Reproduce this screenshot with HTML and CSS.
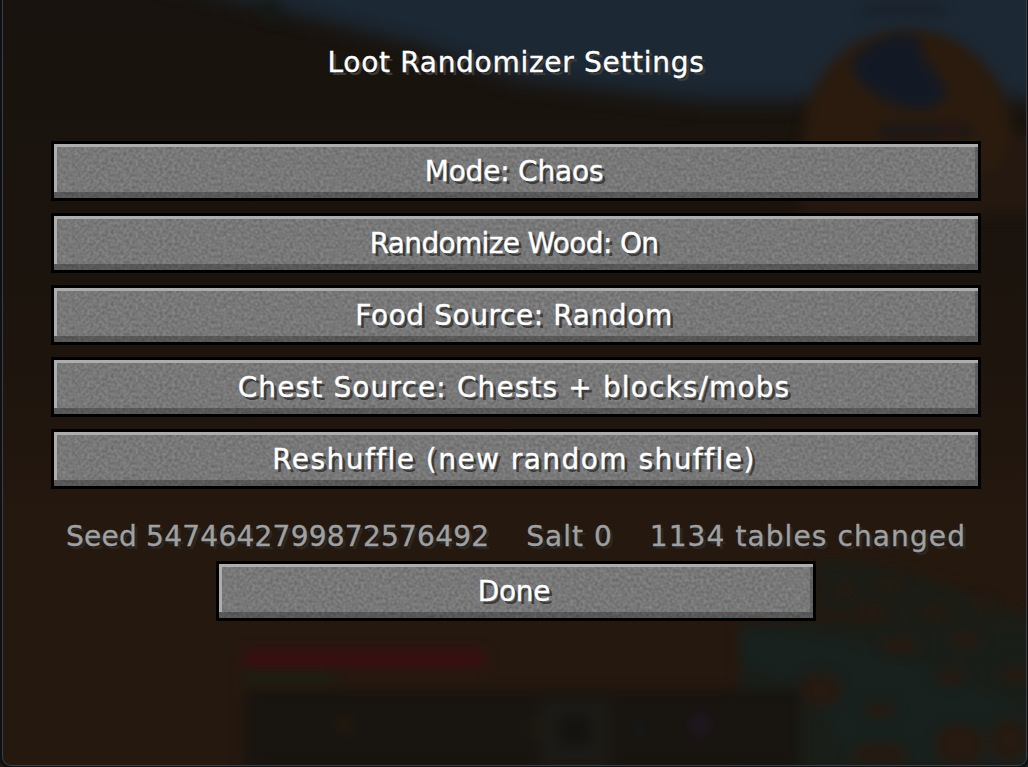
FILE: index.html
```html
<!DOCTYPE html>
<html lang="en">
<head>
<meta charset="utf-8">
<title>Loot Randomizer Settings</title>
<link rel="stylesheet" href="styles.css">
</head>
<body>
<div class="world" aria-hidden="true">
<svg class="world-art" width="1028" height="767" viewBox="0 0 1028 767">
<defs>
<filter id="b10" x="-30%" y="-30%" width="160%" height="160%" color-interpolation-filters="sRGB"><feGaussianBlur stdDeviation="10"/></filter>
<filter id="b4" x="-30%" y="-30%" width="160%" height="160%" color-interpolation-filters="sRGB"><feGaussianBlur stdDeviation="6"/></filter>
<linearGradient id="ground" x1="0" y1="0" x2="0" y2="1">
<stop offset="0" stop-color="#18130e"/><stop offset=".45" stop-color="#1c140d"/><stop offset=".7" stop-color="#25180f"/><stop offset="1" stop-color="#25180f"/>
</linearGradient>
</defs>
<rect width="1028" height="767" fill="url(#ground)"/>
<path filter="url(#b10)" d="M120 -30L340 25L420 45L520 80L700 100L830 100L1060 100L1060 -30Z" fill="#1c2834"/>
<g filter="url(#b4)">
<path d="M258 0L280 0L275 22L265 20Z" fill="#141a14"/>
<rect x="865" y="5" width="80" height="10" fill="#1a2029"/>
<ellipse cx="908" cy="135" rx="104" ry="106" fill="#2a1b0e"/>
<rect x="800" y="135" width="240" height="80" fill="#241810"/>
<ellipse cx="908" cy="135" rx="104" ry="60" fill="#2a1b0e"/>
<path d="M900 35C875 38 852 55 853 68C858 85 880 100 905 108C925 112 945 108 945 90C942 75 920 62 922 48C923 40 915 35 900 35Z" fill="#131924"/>
<rect x="880" y="125" width="90" height="12" fill="#18161a"/>
<rect x="945" y="120" width="10" height="16" fill="#2c1414"/>
<rect x="740" y="622" width="300" height="150" fill="#1a1e19"/>
<path d="M816 561C880 555 960 590 1040 620L1040 640L820 610Z" fill="#1b1d16"/>
<path d="M740 630C820 630 940 665 1040 720L1040 767L850 767C830 700 780 670 740 660Z" fill="#18211e"/>
</g>
<g filter="url(#b4)" fill="#261a11">
<ellipse cx="845" cy="590" rx="14" ry="6"/><ellipse cx="890" cy="585" rx="14" ry="6"/><ellipse cx="870" cy="612" rx="16" ry="8"/>
<ellipse cx="935" cy="612" rx="14" ry="7"/><ellipse cx="980" cy="605" rx="12" ry="6"/><ellipse cx="900" cy="645" rx="18" ry="9"/>
<ellipse cx="965" cy="640" rx="16" ry="8"/><ellipse cx="1015" cy="675" rx="16" ry="8"/><ellipse cx="950" cy="678" rx="14" ry="8"/>
<ellipse cx="820" cy="690" rx="22" ry="18"/><ellipse cx="880" cy="710" rx="16" ry="8"/><ellipse cx="880" cy="755" rx="30" ry="12"/>
<ellipse cx="960" cy="745" rx="26" ry="22"/><ellipse cx="1010" cy="740" rx="20" ry="22"/>
</g>
<g filter="url(#b4)">
<rect x="245" y="650" width="240" height="17" fill="#3a0e12"/>
<rect x="245" y="672" width="90" height="12" fill="#1c2014"/>
<rect x="245" y="690" width="555" height="80" fill="#18140f"/>
<rect x="540" y="700" width="70" height="67" fill="#1c1a16"/>
<rect x="560" y="715" width="30" height="30" fill="#141310"/>
<circle cx="345" cy="725" r="8" fill="#241a0e"/><circle cx="535" cy="728" r="7" fill="#1e1a10"/>
<circle cx="700" cy="725" r="12" fill="#1f161f"/><circle cx="640" cy="730" r="8" fill="#121a18"/>
</g>
<rect x="0" y="44" width="2" height="20" fill="#b98a45"/>
<rect x="0" y="60" width="2" height="6" fill="#d8d8d8"/>
<rect x="0" y="128" width="2" height="8" fill="#a89a8c"/>
<rect x="1026" y="52" width="2" height="7" fill="#a87a3c"/>
<rect x="1026" y="35" width="2" height="1" fill="#c8c8c8"/>
<rect x="1026" y="70" width="2" height="1" fill="#c8c8c8"/>
</svg>
<div class="window-edge"></div>
</div>

<main class="screen">
<h1 class="title"><span class="t-title">Loot Randomizer Settings</span></h1>
<div class="options">
<button class="mc-btn" type="button"><span class="t-mode">Mode: Chaos</span></button>
<button class="mc-btn" type="button"><span class="t-wood">Randomize Wood: On</span></button>
<button class="mc-btn" type="button"><span class="t-food">Food Source: Random</span></button>
<button class="mc-btn" type="button"><span class="t-chest">Chest Source: Chests + blocks/mobs</span></button>
<button class="mc-btn" type="button"><span class="t-shuffle">Reshuffle (new random shuffle)</span></button>
</div>
<p class="status">
<span class="t-seed">Seed 5474642799872576492</span>
<span class="t-salt">Salt 0</span>
<span class="t-tables">1134 tables changed</span>
</p>
<button class="mc-btn done" type="button"><span class="t-done">Done</span></button>
</main>
</body>
</html>
```
FILE: styles.css
```css
* { box-sizing: border-box; }
html, body { margin: 0; padding: 0; height: 100%; background: #17130e; overflow: hidden; }
body {
  position: relative;
  width: 1028px;
  height: 767px;
  font-family: "DejaVu Sans", sans-serif;
  font-size: 28px;
  -webkit-text-stroke: 0.35px currentColor;
}
.world { position: absolute; inset: 0; overflow: hidden; }
.world-art { display: block; }
.window-edge {
  position: absolute;
  inset: 0 1px 1px 2px;
  border: 1px solid #3c3e41;
  border-top: 0;
  border-radius: 0 0 9px 9px;
  box-shadow: 0 0 0 3px #0e1114;
}
.screen {
  position: relative;
  display: flex;
  flex-direction: column;
  align-items: center;
  height: 767px;
  padding: 43px 0 0 4px;
}
.title {
  margin: 0 0 38px;
  height: 60px;
  font: inherit;
  color: #fff;
  line-height: 40px;
  text-shadow: 3px 3px 0 #3a3a3a;
}
.options {
  display: flex;
  flex-direction: column;
  gap: 12px;
}
.mc-btn {
  display: flex;
  align-items: center;
  justify-content: center;
  width: 930px;
  height: 60px;
  padding: 1px 4px 0 0;
  border: 3px solid #000;
  font: inherit;
  color: #fff;
  text-shadow: 3px 3px 0 #3c3c3c;
  white-space: nowrap;
  background-color: #767676;
  background-image:
    linear-gradient(#adadad, #adadad),
    linear-gradient(#adadad, #adadad),
    linear-gradient(rgba(0,0,0,.27), rgba(0,0,0,.27)),
    linear-gradient(rgba(0,0,0,.2), rgba(0,0,0,.2)),
    url("data:image/svg+xml,%3Csvg xmlns='http://www.w3.org/2000/svg' width='1000' height='80'%3E%3Cfilter id='n' color-interpolation-filters='sRGB'%3E%3CfeTurbulence type='fractalNoise' baseFrequency='.33' numOctaves='1' seed='7'/%3E%3CfeColorMatrix values='.2 0 0 0 .37 .2 0 0 0 .37 .2 0 0 0 .37 0 0 0 0 1'/%3E%3C/filter%3E%3Crect width='1000' height='80' filter='url(%23n)'/%3E%3C/svg%3E");
  background-repeat: no-repeat;
  background-position: left top, left top, left bottom, right 0 top 3px, left top;
  background-size: 100% 3px, 3px calc(100% - 6px), 100% 6px, 3px calc(100% - 9px), auto;
}
.done { width: 600px; }
.status {
  display: flex;
  gap: 37px;
  height: 72px;
  margin: 0;
  padding: 31px 0 0 0;
  line-height: 34px;
  color: #a0a0a0;
  text-shadow: 3px 3px 0 #282828;
  white-space: nowrap;
}
.t-title { letter-spacing: 0.7px; }
.t-mode { letter-spacing: -0.2px; }
.t-wood { letter-spacing: -0.67px; }
.t-food { letter-spacing: 0.58px; }
.t-chest { letter-spacing: 1.12px; }
.t-shuffle { letter-spacing: 1.45px; }
.t-seed { letter-spacing: 0.25px; }
.t-salt { letter-spacing: 1px; }
.t-tables { letter-spacing: 1.1px; }
.t-done { letter-spacing: -0.25px; }
```
